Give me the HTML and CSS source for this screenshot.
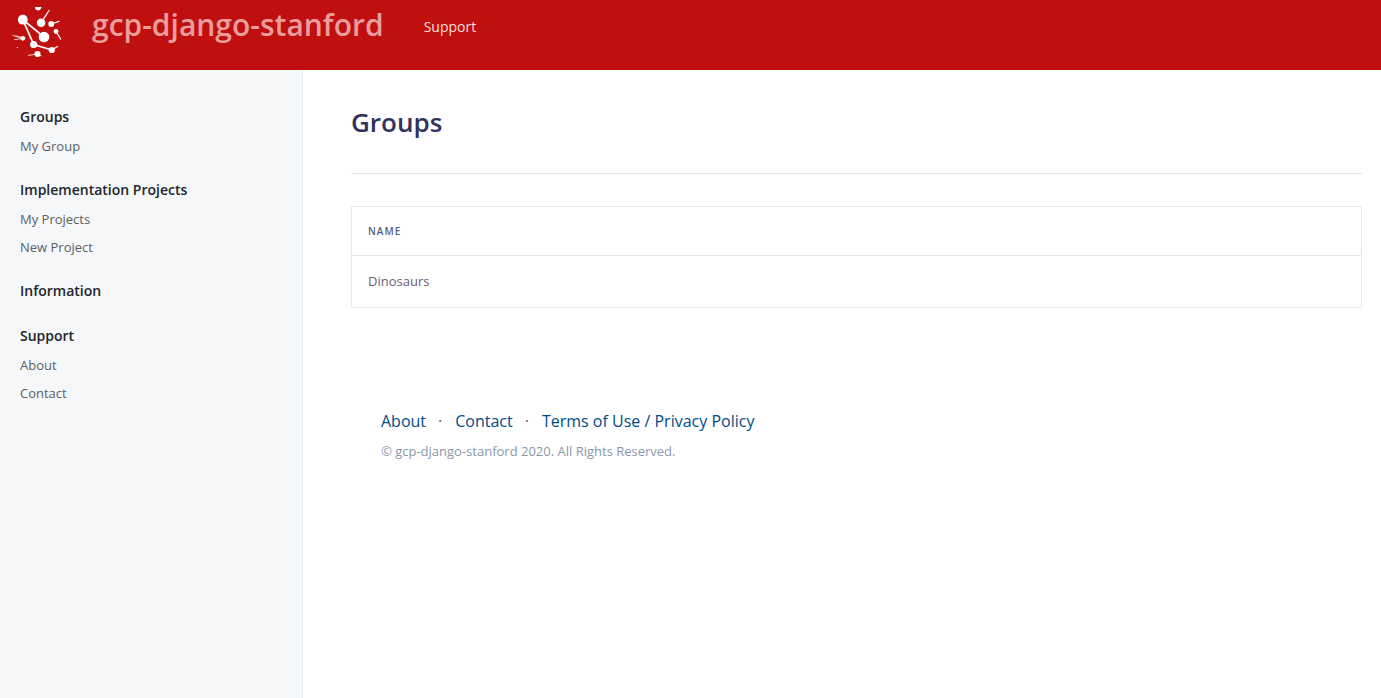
FILE: index.html
```html
<!DOCTYPE html>
<html lang="en">
<head>
<meta charset="utf-8">
<meta name="viewport" content="width=device-width, initial-scale=1">
<title>Groups - gcp-django-stanford</title>
<link rel="stylesheet" href="styles.css">
</head>
<body>
<header class="topbar">
  <a class="logo" href="#" aria-label="Home">
    <svg width="50" height="50" viewBox="12 7 50 50" fill="#fff" stroke="#fff" stroke-linecap="round">
      <g stroke="none">
        <circle cx="22.800" cy="19.700" r="4.900"/>
        <circle cx="41.100" cy="22.800" r="4.300"/>
        <circle cx="51.200" cy="24" r="2.900"/>
        <circle cx="56" cy="31.500" r="2.400"/>
        <circle cx="44" cy="37" r="5.300"/>
        <circle cx="33.700" cy="44.500" r="3.600"/>
        <circle cx="51.800" cy="50" r="3.100"/>
        <circle cx="37.500" cy="54" r="3.100"/>
        <circle cx="22.800" cy="38.300" r="2.400"/>
        <circle cx="17.500" cy="47.500" r=".6"/>
        <path d="M35 7h6.300v1q-1 2.500-3.200 2.500T35 8z"/>
      </g>
      <path fill="none" stroke-width="1.700" d="M22.800 19.700 44 37M22.800 19.700l10.900 24.800 18.100 5.500"/>
      <path fill="none" stroke-width="1.300" d="M41.100 22.800 49 10.500M51.200 24l7.800-2.700M56 31.500l4.700 7.500M51.800 50l5.700-3.500"/>
      <path fill="none" stroke-width=".8" d="M22.800 38.300 13 35.500M22.800 38.300l-8.300 1.400M16 36l4 1M37.500 54l-9 1.300M37.500 54l4 2"/>
    </svg>
  </a>
  <a class="brand" href="#">gcp-django-stanford</a>
  <nav><a class="toplink" href="#">Support</a></nav>
</header>
<div class="layout">
  <nav class="sidebar">
    <section class="group">
      <h2>Groups</h2>
      <ul><li><a href="#">My Group</a></li></ul>
    </section>
    <section class="group">
      <h2>Implementation Projects</h2>
      <ul><li><a href="#">My Projects</a></li><li><a href="#">New Project</a></li></ul>
    </section>
    <section class="group">
      <h2>Information</h2>
    </section>
    <section class="group">
      <h2>Support</h2>
      <ul><li><a href="#">About</a></li><li><a href="#">Contact</a></li></ul>
    </section>
  </nav>
  <div class="content">
    <main>
      <h1>Groups</h1>
      <table class="listing">
        <thead><tr><th scope="col">Name</th></tr></thead>
        <tbody><tr><td><a href="#">Dinosaurs</a></td></tr></tbody>
      </table>
    </main>
    <footer class="footer">
      <ul class="footer-links">
        <li><a href="#">About</a></li>
        <li><a href="#">Contact</a></li>
        <li><a href="#">Terms of Use / Privacy Policy</a></li>
      </ul>
      <p>© gcp-django-stanford 2020. All Rights Reserved.</p>
    </footer>
  </div>
</div>
</body>
</html>
```
FILE: styles.css
```css
* { box-sizing: border-box; }
body {
  margin: 0;
  min-height: 100vh;
  display: flex;
  flex-direction: column;
  font-family: "Open Sans", "Noto Sans", sans-serif;
  font-size: 13px;
  background: #fff;
}
a { color: inherit; text-decoration: none; }
ul { list-style: none; margin: 0; padding: 0; }

.topbar {
  display: flex;
  align-items: flex-start;
  height: 70px;
  padding: 7px 12px;
  background: #bf0f0f;
}
.logo { display: flex; }
.brand {
  margin-left: 30px;
  font-size: 30px;
  line-height: 36px;
  font-weight: 600;
  color: #eb9d9d;
}
.toplink {
  display: block;
  margin-left: 40px;
  font-size: 14px;
  line-height: 40px;
  color: #f9dede;
}

.layout { display: flex; flex: 1; }
.sidebar {
  flex: 0 0 303px;
  padding: 37px 20px;
  background: #f5f7f9;
  border-right: 1px solid #e6e9ee;
}
.group { margin-bottom: 20px; }
.group h2 {
  margin: 0;
  padding-bottom: 5px;
  font-size: 14px;
  line-height: 20px;
  font-weight: 600;
  color: #212529;
}
.group li { line-height: 28px; color: #5c6166; }

.content { flex: 1; padding: 32px 19px 32px 48px; }
h1 {
  margin: 0 0 32px;
  padding-bottom: 31px;
  border-bottom: 1px solid #e4e4e6;
  font-size: 26px;
  line-height: 40px;
  font-weight: 600;
  color: #32325d;
}
.listing {
  width: 100%;
  border-collapse: collapse;
  border: 1px solid #e8e9ec;
}
.listing th, .listing td {
  padding: 16px;
  border: 1px solid #e8e9ec;
  text-align: left;
}
.listing th {
  font-size: 10px;
  line-height: 16px;
  font-weight: 600;
  letter-spacing: 1px;
  text-transform: uppercase;
  color: #525f7f;
}
.listing td { line-height: 19px; color: #6f5a7a; }

.footer { padding: 98px 30px 0; }
.footer-links {
  display: flex;
  flex-wrap: wrap;
  font-size: 16px;
  line-height: 30px;
  color: #004b87;
}
.footer-links li + li::before {
  content: "·";
  margin: 0 13px 0 12px;
  color: #525f7f;
}
.footer p { margin: 0; line-height: 30px; color: #8898aa; }
```
